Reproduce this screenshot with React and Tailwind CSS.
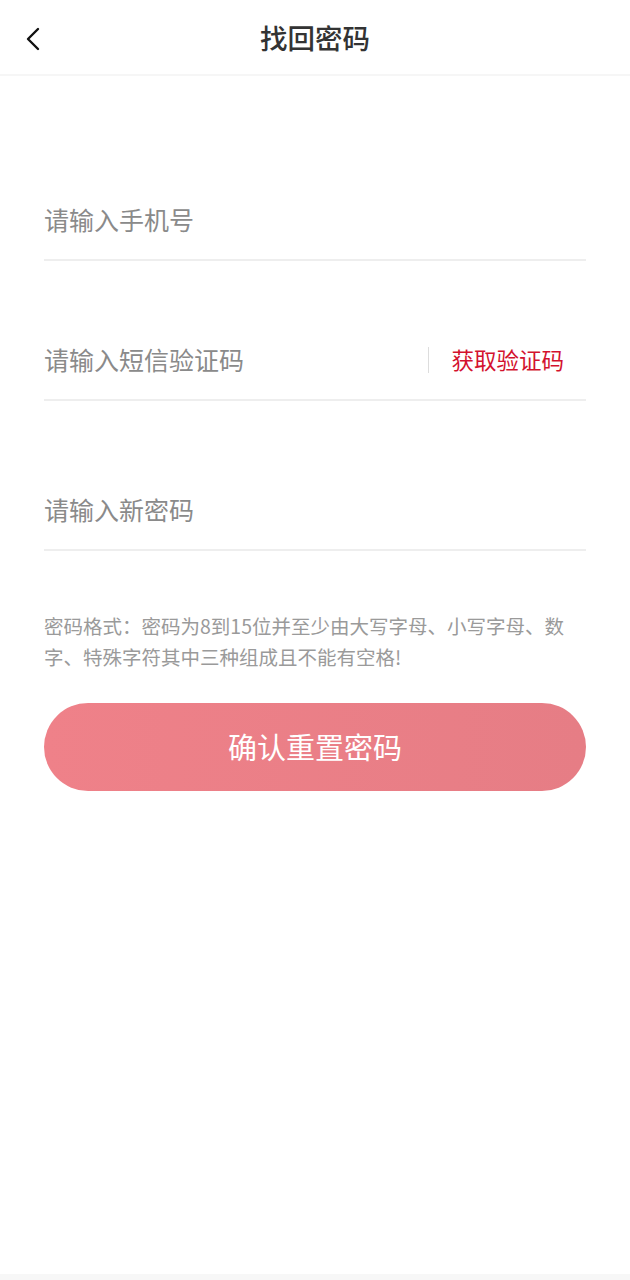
import React from 'react';

const font = { fontFamily: '"Noto Sans CJK SC", "Noto Sans", sans-serif' };

function Field({ placeholder, action }) {
    return (
        <div className="flex items-center h-[84px] pt-[4px] border-b-2 border-[#eeeeee]">
            <span className="flex-1 text-[25px] text-[#8a8a8a]">{placeholder}</span>
            {action && (
                <div className="flex items-center">
                    <div className="w-px h-[26px] bg-[#dddddd] mr-[22px]" />
                    <span className="text-[22.5px] text-[#d3122e] mr-[22px]">{action}</span>
                </div>
            )}
        </div>
    );
}

export default function App() {
    return (
        <div className="w-[630px] h-[1280px] bg-white flex flex-col" style={font}>
            <div className="relative h-[76px] flex items-center justify-center border-b-2 border-[#f6f6f6]">
                <svg className="absolute left-[24px] top-[27px]" width="18" height="24" viewBox="0 0 18 24">
                    <path d="M14 2 L4 12 L14 22" fill="none" stroke="#111" strokeWidth="2.4" strokeLinecap="round" strokeLinejoin="round" />
                </svg>
                <h1 className="text-[27.5px] font-medium text-[#333333] pt-[2px]">找回密码</h1>
            </div>

            <div className="flex-1 px-[44px] pt-[101px]">
                <Field placeholder="请输入手机号" />
                <div className="mt-[56px]">
                    <Field placeholder="请输入短信验证码" action="获取验证码" />
                </div>
                <div className="mt-[66px]">
                    <Field placeholder="请输入新密码" />
                </div>

                <p className="mt-[59px] text-[19.5px] leading-[31px] text-[#9a9a9a]">
                    密码格式：密码为8到15位并至少由大写字母、小写字母、数<br />
                    字、特殊字符其中三种组成且不能有空格!
                </p>

                <button className="mt-[31px] w-full h-[88px] rounded-full bg-gradient-to-r from-[#ef8189] to-[#e67d85] text-white text-[29px] flex items-center justify-center">
                    确认重置密码
                </button>
            </div>

            <div className="h-[6px] bg-[#f7f7f7]" />
        </div>
    );
}
